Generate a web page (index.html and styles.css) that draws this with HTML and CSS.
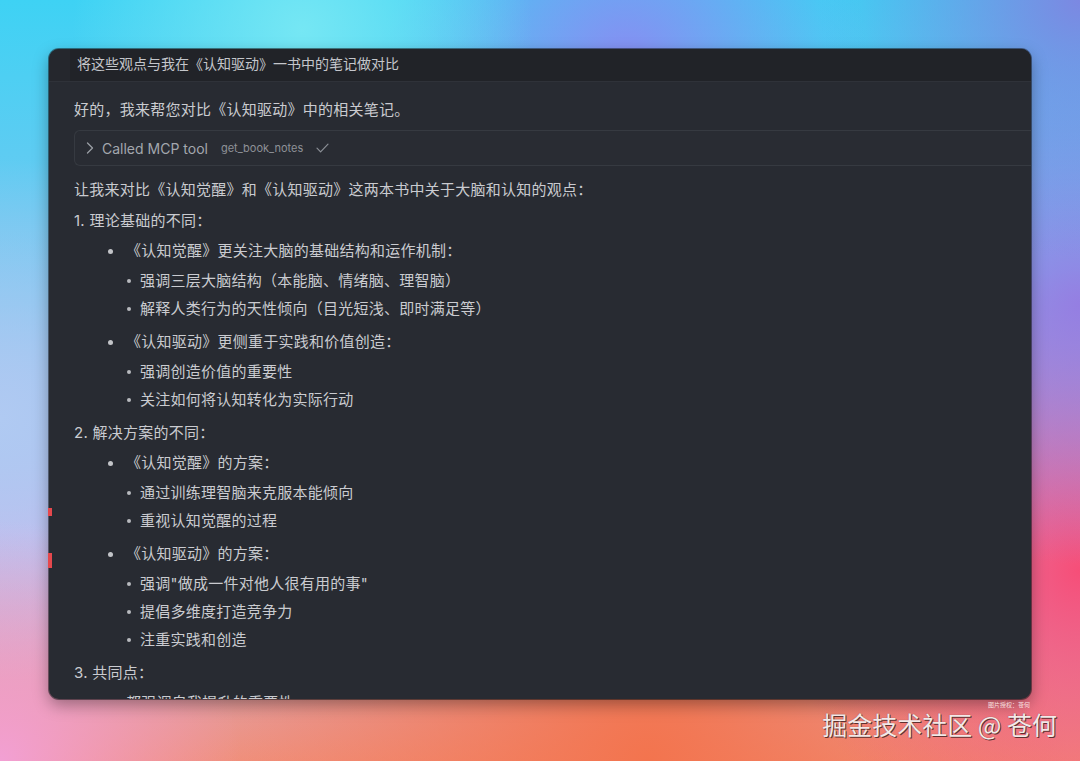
FILE: index.html
```html
<!DOCTYPE html>
<html lang="zh-CN">
<head>
<meta charset="utf-8">
<title>MCP Chat</title>
<link rel="stylesheet" href="styles.css">
</head>
<body>
<div class="stage">
  <div class="window">
    <div class="user-band">
      <div class="user-msg">将这些观点与我在《认知驱动》一书中的笔记做对比</div>
    </div>
    <div class="content">
      <p class="line">好的，我来帮您对比《认知驱动》中的相关笔记。</p>
      <div class="tool">
        <svg class="chev" width="8" height="12" viewBox="0 0 8 12"><path d="M1.5 1 L6.5 6 L1.5 11" fill="none" stroke="#9a9ea5" stroke-width="1.3" stroke-linecap="round" stroke-linejoin="round"/></svg>
        <span class="tool-label">Called MCP tool</span>
        <span class="tool-name">get_book_notes</span>
        <svg class="check" width="13" height="10" viewBox="0 0 13 10"><path d="M1 5.2 L4.6 8.8 L12 1.2" fill="none" stroke="#8b8f96" stroke-width="1.2" stroke-linecap="round" stroke-linejoin="round"/></svg>
      </div>
      <p class="line intro">让我来对比《认知觉醒》和《认知驱动》这两本书中关于大脑和认知的观点：</p>

      <p class="line num">1. 理论基础的不同：</p>
      <ul class="l1">
        <li>
          <div class="row"><span class="dot"></span><span>《认知觉醒》更关注大脑的基础结构和运作机制：</span></div>
          <ul class="l2">
            <li>强调三层大脑结构（本能脑、情绪脑、理智脑）</li>
            <li>解释人类行为的天性倾向（目光短浅、即时满足等）</li>
          </ul>
        </li>
        <li>
          <div class="row"><span class="dot"></span><span>《认知驱动》更侧重于实践和价值创造：</span></div>
          <ul class="l2">
            <li>强调创造价值的重要性</li>
            <li>关注如何将认知转化为实际行动</li>
          </ul>
        </li>
      </ul>

      <p class="line num">2. 解决方案的不同：</p>
      <ul class="l1">
        <li>
          <div class="row"><span class="dot"></span><span>《认知觉醒》的方案：</span></div>
          <ul class="l2">
            <li>通过训练理智脑来克服本能倾向</li>
            <li>重视认知觉醒的过程</li>
          </ul>
        </li>
        <li>
          <div class="row"><span class="dot"></span><span>《认知驱动》的方案：</span></div>
          <ul class="l2">
            <li>强调"做成一件对他人很有用的事"</li>
            <li>提倡多维度打造竞争力</li>
            <li>注重实践和创造</li>
          </ul>
        </li>
      </ul>

      <p class="line num">3. 共同点：</p>
      <ul class="l1">
        <li>
          <div class="row"><span class="dot"></span><span>都强调自我提升的重要性</span></div>
        </li>
      </ul>
    </div>
  </div>
  <span class="mark mark-a"></span>
  <span class="mark mark-b"></span>
  <div class="watermark">
    <span class="wm-small">图片授权：苍何</span>
    <span class="wm-main">掘金技术社区 @ 苍何</span>
  </div>
</div>
</body>
</html>
```

FILE: styles.css
```css
html, body {
  margin: 0;
  padding: 0;
}

body {
  width: 1080px;
  height: 761px;
  overflow: hidden;
  font-family: Inter, "Noto Sans CJK SC", sans-serif;
  background:
    radial-gradient(circle at 28% 4%, rgba(120, 232, 244, 0.95) 0, rgba(120, 232, 244, 0) 230px),
    radial-gradient(circle at 58% 8%, rgba(138, 138, 242, 0.95) 0, rgba(138, 138, 242, 0) 240px),
    radial-gradient(circle at 100% 0%, rgba(124, 136, 226, 1) 0, rgba(124, 136, 226, 0) 260px),
    radial-gradient(circle at 100% 40%, rgba(150, 120, 226, 0.9) 0, rgba(150, 120, 226, 0) 260px),
    radial-gradient(circle at 100% 75%, rgba(246, 78, 120, 1) 0, rgba(246, 78, 120, 0) 300px),
    radial-gradient(circle at 60% 100%, rgba(243, 116, 78, 1) 0, rgba(243, 116, 78, 0) 420px),
    radial-gradient(circle at 0% 100%, rgba(242, 160, 212, 1) 0, rgba(242, 160, 212, 0) 240px),
    radial-gradient(circle at 0% 55%, rgba(176, 202, 242, 1) 0, rgba(176, 202, 242, 0) 260px),
    linear-gradient(180deg, #3ed2f4 0%, #7cc6f0 40%, #c8b8ec 70%, #f0907c 100%);
}

.stage {
  position: relative;
  width: 1080px;
  height: 761px;
  padding: 49px 0 0 49px;
  box-sizing: border-box;
}

.window {
  width: 982px;
  height: 650px;
  background: #282b32;
  border-radius: 10px;
  overflow: hidden;
  box-shadow: 0 6px 16px rgba(0, 0, 0, 0.35), 0 0 0 1px rgba(20, 22, 26, 0.5);
  color: #cacbd0;
}

.user-band {
  height: 33px;
  box-sizing: border-box;
  border-bottom: 1px solid #2f3239;
  padding-left: 21px;
  background: #25272d;
}

.user-msg {
  height: 32px;
  box-sizing: border-box;
  padding: 5px 0 0 7px;
  line-height: 20px;
  font-size: 14px;
  color: #c4c6cb;
  background: #212328;
}

.content {
  padding: 14px 0 0 25px;
}

.line {
  margin: 0;
  font-size: 15px;
  line-height: 28px;
  letter-spacing: 0.25px;
}

.tool {
  display: flex;
  align-items: center;
  height: 36px;
  box-sizing: border-box;
  margin: 6px -2px 10px 0;
  padding-left: 11px;
  border: 1px solid #363a41;
  border-right: none;
  border-radius: 6px 0 0 6px;
  background: #292c33;
}

.chev {
  flex: none;
  margin-right: 8px;
}

.tool-label {
  font-size: 14px;
  color: #a3a7ae;
  margin-right: 13px;
}

.tool-name {
  font-size: 11px;
  color: #8e9197;
  margin-right: 13px;
}

.check {
  flex: none;
}

.intro {
  margin-bottom: 3px;
}

ul {
  list-style: none;
  margin: 0;
  padding: 0;
}

.l1 {
  margin-top: 2px;
  padding-left: 34px;
  font-size: 15px;
  line-height: 28px;
  letter-spacing: 0.25px;
}

.row {
  display: flex;
  align-items: center;
}

.dot {
  flex: none;
  width: 5px;
  height: 5px;
  border-radius: 50%;
  background: #c2c4c8;
  margin-right: 13px;
}

.l2 {
  margin: 2px 0 5px;
  padding-left: 19px;
}

.l2 li {
  display: flex;
  align-items: center;
}

.l2 li::before {
  content: "";
  flex: none;
  width: 4px;
  height: 4px;
  border-radius: 50%;
  background: #b8babe;
  margin-right: 9px;
}

.mark {
  position: absolute;
  left: 48px;
  width: 4px;
  background: #e5484d;
}

.mark-a {
  top: 508px;
  height: 8px;
}

.mark-b {
  top: 553px;
  height: 15px;
}

.watermark {
  position: absolute;
  right: 23px;
  top: 701px;
  display: flex;
  flex-direction: column;
  align-items: flex-end;
}

.wm-small {
  font-family: "Noto Sans CJK SC", sans-serif;
  font-size: 6px;
  line-height: 7px;
  color: rgba(255, 240, 240, 0.9);
  margin-right: 27px;
}

.wm-main {
  font-family: "Noto Sans CJK SC", sans-serif;
  font-size: 25px;
  line-height: 24px;
  margin-top: 4px;
  color: #f3e9e8;
  text-shadow: 1px 1px 0 rgba(70, 36, 36, 0.85), 0 0 1px rgba(70, 36, 36, 0.6);
  white-space: nowrap;
}
```
